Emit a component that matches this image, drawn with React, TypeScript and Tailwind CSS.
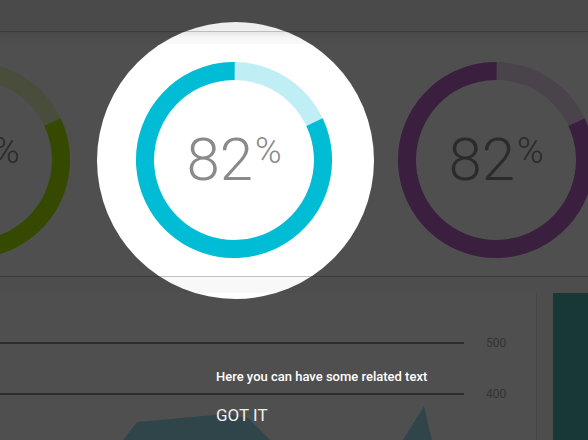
import React from 'react'

const Donut = ({ color, track }: { color: string; track: string }) => {
  const r = 89
  const c = 2 * Math.PI * r
  return (
    <div className="relative w-[196px] h-[196px] flex items-center justify-center">
      <svg className="absolute inset-0" width="196" height="196" viewBox="0 0 196 196">
        <circle cx="98" cy="98" r={r} fill="none" stroke={track} strokeWidth="18" />
        <circle
          cx="98"
          cy="98"
          r={r}
          fill="none"
          stroke={color}
          strokeWidth="18"
          strokeDasharray={`${c * 0.82} ${c}`}
          transform="rotate(-25.2 98 98)"
        />
      </svg>
      <div className="relative flex items-start text-[#8a8a8a] font-light">
        <span className="text-[60px] leading-none">82</span>
        <span className="text-[36px] leading-none mt-[3px] ml-[2px]">%</span>
      </div>
    </div>
  )
}

const App = () => {
  return (
    <div className="relative w-[588px] h-[440px] overflow-hidden bg-[#f8f8f8] font-['Roboto',sans-serif]">
      <div className="h-[32px] bg-[#efefef] border-b border-[#bdbdbd] shadow-[0_2px_6px_rgba(0,0,0,0.10)]" />

      <section className="mt-[12px] h-[233px] bg-white border-b border-[#c2c2c2] flex items-center ml-[-159px]">
        <div className="w-[262px] flex justify-center shrink-0">
          <Donut color="#aeea00" track="#ebf9bf" />
        </div>
        <div className="w-[262px] flex justify-center shrink-0">
          <Donut color="#00bcd4" track="#bfeef4" />
        </div>
        <div className="w-[262px] flex justify-center shrink-0">
          <Donut color="#ba68c8" track="#eed9f1" />
        </div>
      </section>

      <div className="mt-[16px] flex gap-[16px]">
        <div className="w-[537px] h-[160px] bg-white border-r border-[#dddddd] shrink-0">
          <svg width="537" height="147" viewBox="0 0 537 147">
            <line x1="0" y1="50" x2="464" y2="50" stroke="#929292" strokeWidth="2" />
            <line x1="0" y1="101" x2="464" y2="101" stroke="#929292" strokeWidth="2" />
            <text x="486" y="54" fontSize="12" fill="#a8a8a8" fontFamily="Roboto, sans-serif">500</text>
            <text x="486" y="105" fontSize="12" fill="#a8a8a8" fontFamily="Roboto, sans-serif">400</text>
            <polygon points="123,147 137,129 225,121 248,125 270,147" fill="#9cdfec" />
            <polygon points="403,147 424,113 432,147" fill="#9cdfec" />
          </svg>
        </div>
        <div className="flex-1 h-[160px] bg-[#4db6ac]" />
      </div>

      <div className="absolute inset-0 overflow-hidden pointer-events-none">
        <div className="absolute left-[97px] top-[22px] w-[277px] h-[277px] rounded-full shadow-[0_0_0_1200px_rgba(0,0,0,0.69)]" />
      </div>

      <div className="absolute left-[216px] top-[367px] text-white text-[13px] font-medium">
        Here you can have some related text
      </div>
      <div className="absolute left-[216px] top-[403px] text-[#f0f0f0] text-[17px]">GOT IT</div>
    </div>
  )
}

export default App
